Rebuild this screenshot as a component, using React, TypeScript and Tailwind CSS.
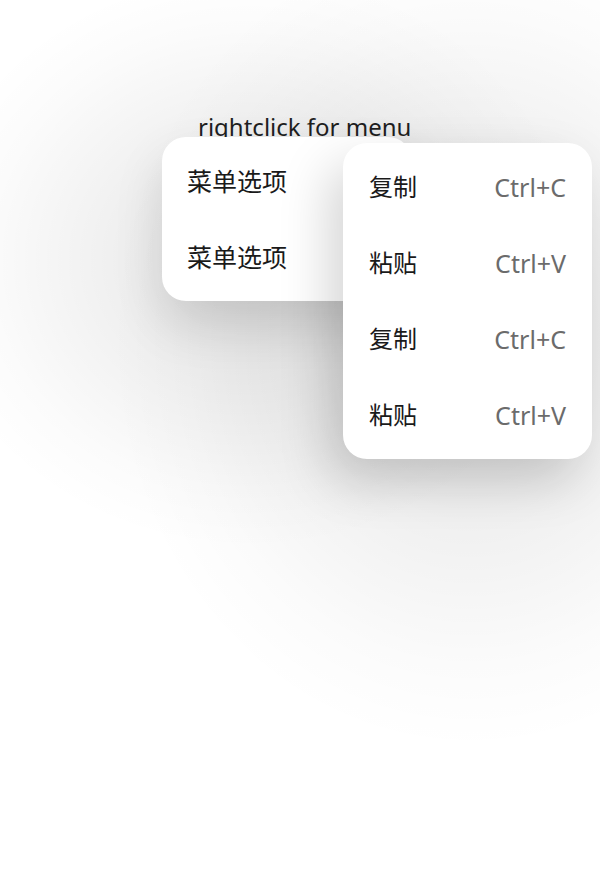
import React from "react";

const font = { fontFamily: '"Noto Sans", "Noto Sans CJK SC", sans-serif' };

function Row({ label, shortcut, size }: { label: string; shortcut?: string; size: string }) {
  return (
    <div className="flex h-[76px] items-center justify-between">
      <span className={`${size} leading-none text-[#1a1a1a]`}>{label}</span>
      {shortcut && <span className="text-[25px] leading-none text-[#6b6b6b]">{shortcut}</span>}
    </div>
  );
}

export default function App() {
  return (
    <div
      className="relative h-[888px] w-[600px] overflow-hidden bg-white bg-[radial-gradient(ellipse_330px_290px_at_250px_260px,rgba(0,0,0,0.11)_0%,rgba(0,0,0,0.05)_50%,rgba(0,0,0,0.015)_80%,rgba(0,0,0,0)_100%),radial-gradient(ellipse_360px_410px_at_470px_340px,rgba(0,0,0,0.13)_0%,rgba(0,0,0,0.06)_45%,rgba(0,0,0,0.015)_80%,rgba(0,0,0,0)_100%)]"
      style={font}
    >
      <div className="pl-[198px] pt-[112px] text-[24px] leading-[30px] text-[#1f1f1f]">rightclick for menu</div>
      <div className="absolute left-[162px] top-[137px] w-[250px] rounded-[24px] bg-white px-[25px] py-[6px] shadow-[0_24px_50px_rgba(0,0,0,0.12)]">
        <Row label="菜单选项" size="text-[25px]" />
        <Row label="菜单选项" size="text-[25px]" />
      </div>
      <div className="absolute left-[343px] top-[143px] w-[249px] rounded-[24px] bg-white px-[26px] py-[6px] shadow-[-14px_22px_50px_rgba(0,0,0,0.17)]">
        <Row label="复制" shortcut="Ctrl+C" size="text-[24px]" />
        <Row label="粘贴" shortcut="Ctrl+V" size="text-[24px]" />
        <Row label="复制" shortcut="Ctrl+C" size="text-[24px]" />
        <Row label="粘贴" shortcut="Ctrl+V" size="text-[24px]" />
      </div>
    </div>
  );
}
